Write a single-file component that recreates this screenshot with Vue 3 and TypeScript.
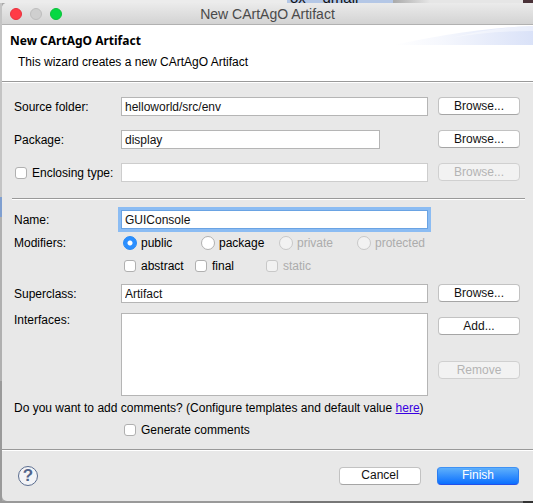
<script setup lang="ts">
import { ref } from 'vue'

interface Option {
  value: string
  disabled?: boolean
}

const sourceFolder = ref('helloworld/src/env')
const packageName = ref('display')
const encloses = ref(false)
const enclosingType = ref('')
const name = ref('GUIConsole')
const superclass = ref('Artifact')
const interfaces = ref('')
const comments = ref(false)
const access = ref('public')
const flags = ref<string[]>([])

const accessOptions: Option[] = [
  { value: 'public' },
  { value: 'package' },
  { value: 'private', disabled: true },
  { value: 'protected', disabled: true },
]
const flagOptions: Option[] = [
  { value: 'abstract' },
  { value: 'final' },
  { value: 'static', disabled: true },
]
</script>

<template>
  <div class="desktop">
    <div class="behind-top" aria-hidden="true"><span class="tab">ox&nbsp; &nbsp; gmail</span></div>
    <div class="behind-side" aria-hidden="true"></div>
    <main class="window">
      <div class="titlebar">
        <div class="lights">
          <button type="button" class="light red" aria-label="Close"></button>
          <button type="button" class="light" aria-label="Minimize" disabled></button>
          <button type="button" class="light green" aria-label="Zoom"></button>
        </div>
        <span class="title">New CArtAgO Artifact</span>
      </div>

      <header class="banner">
        <div class="banner-text">
          <h1>New CArtAgO Artifact</h1>
          <p>This wizard creates a new CArtAgO Artifact</p>
        </div>
        <svg class="swoosh" width="140" height="20" viewBox="0 0 140 20" aria-hidden="true">
          <defs>
            <linearGradient id="fade">
              <stop offset="0" stop-color="#fff" />
              <stop offset="0.35" stop-color="#f5f7fd" />
              <stop offset="1" stop-color="#dae2f8" />
            </linearGradient>
          </defs>
          <path d="M0 20C40 12 85 3 140 1V20Z" fill="url(#fade)" />
          <path d="M58 13C85 6 110 2 140 1V6C112 6 85 8 58 13Z" fill="#fff" opacity="0.4" />
        </svg>
      </header>

      <form class="form" @submit.prevent>
        <section class="grid location">
          <label for="source">Source folder:</label>
          <input id="source" v-model="sourceFolder" type="text" class="field" />
          <button type="button" class="push">Browse...</button>

          <label for="package">Package:</label>
          <input id="package" v-model="packageName" type="text" class="field short" />
          <button type="button" class="push">Browse...</button>

          <label class="option enclosing">
            <input v-model="encloses" type="checkbox" class="check" />Enclosing type:
          </label>
          <input v-model="enclosingType" type="text" class="field" aria-label="Enclosing type" disabled />
          <button type="button" class="push" disabled>Browse...</button>
        </section>

        <hr />

        <section class="grid naming">
          <label for="name">Name:</label>
          <input id="name" v-model="name" type="text" class="field focused" />
        </section>

        <section class="grid modifiers">
          <span id="modifiers">Modifiers:</span>
          <div class="choices" role="group" aria-labelledby="modifiers">
            <div class="access">
              <label v-for="o in accessOptions" :key="o.value" class="option" :class="{ off: o.disabled }">
                <input v-model="access" type="radio" name="access" class="radio" :value="o.value" :disabled="o.disabled" />{{ o.value }}
              </label>
            </div>
            <div class="flags">
              <label v-for="o in flagOptions" :key="o.value" class="option" :class="{ off: o.disabled }">
                <input v-model="flags" type="checkbox" class="check" :value="o.value" :disabled="o.disabled" />{{ o.value }}
              </label>
            </div>
          </div>
        </section>

        <section class="grid parent">
          <label for="superclass">Superclass:</label>
          <input id="superclass" v-model="superclass" type="text" class="field" />
          <button type="button" class="push">Browse...</button>
        </section>

        <section class="grid interfaces">
          <label for="interfaces">Interfaces:</label>
          <textarea id="interfaces" v-model="interfaces" class="field area"></textarea>
          <div class="stack">
            <button type="button" class="push">Add...</button>
            <button type="button" class="push" disabled>Remove</button>
          </div>
        </section>

        <p class="question">
          Do you want to add comments? (Configure templates and default value <a href="#">here</a>)
        </p>
        <label class="option generate">
          <input v-model="comments" type="checkbox" class="check" />Generate comments
        </label>
      </form>

      <footer class="footer">
        <button type="button" class="help" aria-label="Help">?</button>
        <div class="actions">
          <button type="button" class="push">Cancel</button>
          <button type="button" class="push primary">Finish</button>
        </div>
      </footer>
    </main>
    <div class="behind-bottom" aria-hidden="true"></div>
  </div>
</template>

<style>
body {
  background: #a9a9a9;
}
</style>

<style scoped>
* {
  box-sizing: border-box;
}

.desktop {
  display: grid;
  grid-template-columns: 2px 1fr;
  grid-template-rows: 3px auto 2px;
  min-height: 100vh;
  overflow: hidden;
  color: #000;
  font: 12px/14px "Liberation Sans", Arial, sans-serif;
}

.behind-top {
  display: flex;
  grid-column: 1 / -1;
  align-items: flex-end;
  height: 3px;
  padding-left: 287px;
  overflow: hidden;
  background: linear-gradient(90deg, #ececec 0 393px, #aaa 393px, #e6e6e6 430px 523px, #4a3238 523px);
}

.tab {
  width: 106px;
  height: 12px;
  padding-left: 3px;
  background: #b4c7e6;
  color: #111;
  font-size: 15px;
  white-space: nowrap;
}

.behind-side {
  background: linear-gradient(#c4c4c4 0 194px, #7f9fd0 194px 214px, #b0b0b0 214px 378px, #9a9a9a 378px);
}

.behind-bottom {
  grid-column: 1 / -1;
  background: linear-gradient(90deg, #999 0 290px, #777 290px 523px, #333 523px);
}

.window {
  display: flex;
  flex-direction: column;
  min-width: 0;
  overflow: hidden;
  border-radius: 5px 0 0 5px;
  background: #e8e8e8;
}

.titlebar {
  display: grid;
  grid-template-columns: 1fr auto 1fr;
  align-items: center;
  height: 22px;
  padding: 0 8px;
  border-bottom: 1px solid #b1b1b1;
  background: linear-gradient(#ebebeb, #d3d3d3);
}

.lights {
  display: flex;
  gap: 8px;
}

.light {
  width: 12px;
  height: 12px;
  padding: 0;
  border: 1px solid #bdbdbd;
  border-radius: 50%;
  background: #cfcfcf;
}

.light.red {
  border-color: #e8303c;
  background: #ff3b47;
}

.light.green {
  border-color: #0bc03a;
  background: #05d843;
}

.title {
  color: #4a4a4a;
  font-size: 14px;
  line-height: 18px;
}

.banner {
  display: flex;
  justify-content: space-between;
  height: 57px;
  border-bottom: 1px solid #999;
  background: #fff;
}

.banner-text {
  padding: 7px 0 0 8px;
  white-space: nowrap;
}

.swoosh {
  flex: none;
}

h1 {
  margin: 0;
  font: bold 12px/18px "Noto Sans", "Open Sans", sans-serif;
}

p {
  margin: 0;
}

.banner-text p {
  padding: 5px 0 0 8px;
}

.form {
  display: flex;
  flex-direction: column;
  padding: 14px 13px 12px 12px;
  border-top: 1px solid #fff;
}

.grid {
  display: grid;
  grid-template-columns: 107px minmax(0, 1fr) 82px;
  align-items: center;
  row-gap: 14px;
}

.field {
  width: 100%;
  height: 19px;
  margin: 0;
  padding: 0 3px;
  border: 1px solid #b5b5b5;
  border-radius: 0;
  outline: none;
  background: #fff;
  color: #111;
  font: inherit;
}

.grid > .field {
  width: calc(100% - 10px);
}

.grid > .short {
  width: calc(100% - 58px);
}

.field:disabled {
  border-color: #cdcdcd;
}

.grid > .focused {
  border-color: #6aa3e3;
  box-shadow: 0 0 0 3px #8bbcf3;
}

.push {
  align-self: start;
  width: 82px;
  height: 18px;
  padding: 0 0 1px;
  border: 1px solid #c2c2c2;
  border-bottom-color: #a5a5a5;
  border-radius: 4px;
  background: #fff;
  color: #111;
  font: inherit;
}

.push:disabled {
  border-color: #d0d0d0;
  background: #f2f2f2;
  color: #b4b4b4;
}

.primary {
  border-color: #3f92f5 #2a7df2 #2350e8;
  background: linear-gradient(#5fb0fb, #0a6fff);
  color: #fff;
}

hr {
  width: calc(100% + 7px);
  height: 2px;
  margin: 16px 0 10px -2px;
  border: 0;
  border-top: 1px solid #999;
  background: #fff;
}

.option {
  display: flex;
  align-items: center;
  white-space: nowrap;
}

.off {
  color: #acacac;
}

.check,
.radio {
  flex: none;
  margin: 0;
  border: 1px solid #b0b0b0;
  background: #fff;
  appearance: none;
}

.check {
  width: 12px;
  height: 12px;
  margin-right: 5px;
  border-radius: 3px;
}

.radio {
  width: 14px;
  height: 14px;
  margin-right: 4px;
  border-radius: 50%;
}

.radio:checked {
  border-color: #2488f5;
  background: radial-gradient(circle, #fff 0 2px, #2b8fff 3px);
}

.check:checked {
  background: #2b8fff;
}

.check:disabled,
.radio:disabled {
  border-color: #c8c8c8;
  background: #f2f2f2;
}

.enclosing {
  padding-left: 1px;
}

.modifiers {
  align-items: start;
  padding-top: 7px;
}

.choices {
  grid-column: 2 / -1;
}

.access {
  display: grid;
  grid-template-columns: repeat(4, 78px);
  padding-left: 2px;
}

.flags {
  display: grid;
  grid-template-columns: repeat(3, 71px);
  padding: 9px 0 0 3px;
}

.parent {
  padding-top: 11px;
}

.interfaces {
  align-items: start;
  padding-top: 10px;
}

.area {
  display: block;
  height: 83px;
  resize: none;
}

.stack {
  display: flex;
  flex-direction: column;
  gap: 26px;
  padding-top: 4px;
}

.question {
  padding-top: 5px;
  white-space: nowrap;
}

.question a {
  color: #3a00e0;
}

.generate {
  align-self: flex-start;
  padding: 8px 0 0 110px;
}

.footer {
  display: flex;
  flex: 1;
  align-items: center;
  justify-content: space-between;
  padding: 0 14px 0 16px;
  border-top: 1px solid #999;
  box-shadow: inset 0 1px #fff;
}

.help {
  width: 20px;
  height: 20px;
  padding: 0;
  border: 1px solid #5a6c8f;
  border-radius: 50%;
  background: #f3f4f7;
  color: #52658b;
  font: bold 17px/18px "Liberation Sans", Arial, sans-serif;
}

.actions {
  display: flex;
  gap: 16px;
}
</style>
